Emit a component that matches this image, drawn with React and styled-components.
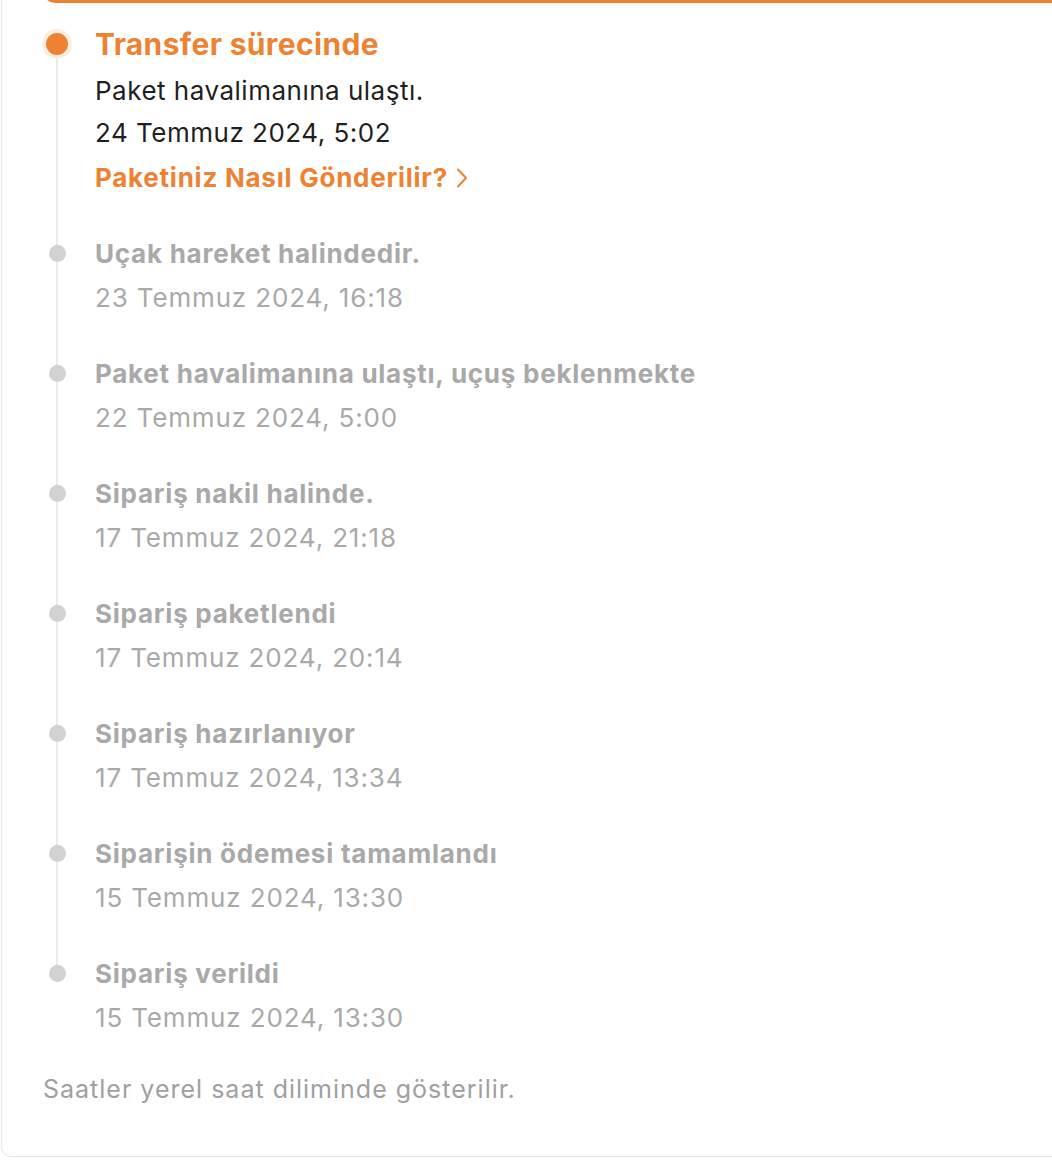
import React from 'react'
import styled, { createGlobalStyle } from 'styled-components'

const GlobalStyle = createGlobalStyle`
  html, body {
    margin: 0;
    padding: 0;
    background: #ffffff;
    overflow: hidden;
  }
  body {
    font-family: Inter, "Noto Sans", "Liberation Sans", sans-serif;
    -webkit-font-smoothing: antialiased;
  }
`

const ORANGE = '#ee8233'

const steps = [
  { title: 'Uçak hareket halindedir.', date: '23 Temmuz 2024, 16:18' },
  { title: 'Paket havalimanına ulaştı, uçuş beklenmekte', date: '22 Temmuz 2024, 5:00' },
  { title: 'Sipariş nakil halinde.', date: '17 Temmuz 2024, 21:18' },
  { title: 'Sipariş paketlendi', date: '17 Temmuz 2024, 20:14' },
  { title: 'Sipariş hazırlanıyor', date: '17 Temmuz 2024, 13:34' },
  { title: 'Siparişin ödemesi tamamlandı', date: '15 Temmuz 2024, 13:30' },
  { title: 'Sipariş verildi', date: '15 Temmuz 2024, 13:30' },
]

export default function App() {
  return (
    <>
      <GlobalStyle />
      <Card>
        <StatusBox />
        <Timeline>
          <Item>
            <Marker>
              <Dot active />
              <Line active />
            </Marker>
            <Body gap="33px">
              <ActiveTitle>Transfer sürecinde</ActiveTitle>
              <Detail>Paket havalimanına ulaştı.</Detail>
              <Detail>24 Temmuz 2024, 5:02</Detail>
              <Link href="#">
                Paketiniz Nasıl Gönderilir?
                <svg width="14" height="22" viewBox="0 0 14 22" fill="none">
                  <polyline points="4,2.5 12,11 4,19.5" stroke={ORANGE} strokeWidth="2" strokeLinecap="round" strokeLinejoin="round" />
                </svg>
              </Link>
            </Body>
          </Item>
          {steps.map((s, i) => {
            const last = i === steps.length - 1
            return (
              <Item key={i}>
                <Marker>
                  <Dot />
                  {!last && <Line />}
                </Marker>
                <Body gap={last ? '0' : '32px'}>
                  <StepTitle>{s.title}</StepTitle>
                  <StepDate>{s.date}</StepDate>
                </Body>
              </Item>
            )
          })}
        </Timeline>
        <Note>Saatler yerel saat diliminde gösterilir.</Note>
      </Card>
    </>
  )
}

const Card = styled.div`
  width: 1070px;
  margin-left: 1px;
  border: 1px solid #e6e6e6;
  border-top: none;
  border-radius: 0 0 10px 10px;
  padding: 0 0 52px 41px;
  box-sizing: border-box;
`

const StatusBox = styled.div`
  box-sizing: border-box;
  height: 12px;
  margin-top: -9px;
  margin-right: -20px;
  border: 3px solid ${ORANGE};
  border-right: none;
  border-radius: 0 0 0 12px;
`

const Timeline = styled.div`
  display: flex;
  flex-direction: column;
  padding-top: 23px;
`

const Item = styled.div`
  display: flex;
`

const Marker = styled.div`
  width: 28px;
  flex-shrink: 0;
  display: flex;
  flex-direction: column;
  align-items: center;
  margin-right: 24px;
`

const Dot = styled.div`
  width: ${p => (p.active ? '22px' : '17px')};
  height: ${p => (p.active ? '22px' : '17px')};
  margin-top: ${p => (p.active ? '7px' : '13px')};
  border-radius: 50%;
  background: ${p => (p.active ? ORANGE : '#d2d2d2')};
  box-shadow: ${p => (p.active ? '0 0 0 4px #fcefe2' : 'none')};
  flex-shrink: 0;
  position: relative;
  z-index: 1;
`

const Line = styled.div`
  width: 2px;
  flex: 1;
  margin-top: ${p => (p.active ? '4px' : '0')};
  margin-bottom: -14px;
  background: #ebebeb;
`

const Body = styled.div`
  display: flex;
  flex-direction: column;
  padding-bottom: ${p => p.gap};
`

const ActiveTitle = styled.div`
  color: ${ORANGE};
  font-size: 30px;
  font-weight: 700;
  letter-spacing: 0.35px;
  line-height: 36px;
  margin-bottom: 8px;
`

const Detail = styled.div`
  color: #1f1f1f;
  font-size: 26px;
  letter-spacing: 0.5px;
  line-height: 42px;
`

const Link = styled.a`
  display: flex;
  align-items: center;
  gap: 6px;
  margin-top: 3px;
  color: ${ORANGE};
  font-size: 26px;
  font-weight: 700;
  letter-spacing: 0.75px;
  line-height: 42px;
  text-decoration: none;
`

const StepTitle = styled.div`
  color: #a9a9a9;
  font-size: 26px;
  font-weight: 700;
  letter-spacing: 0.75px;
  line-height: 44px;
`

const StepDate = styled.div`
  color: #a9a9a9;
  font-size: 26px;
  letter-spacing: 0.85px;
  line-height: 44px;
`

const Note = styled.div`
  margin-top: 34px;
  color: #a0a0a0;
  font-size: 25px;
  letter-spacing: 1px;
  line-height: 30px;
`
